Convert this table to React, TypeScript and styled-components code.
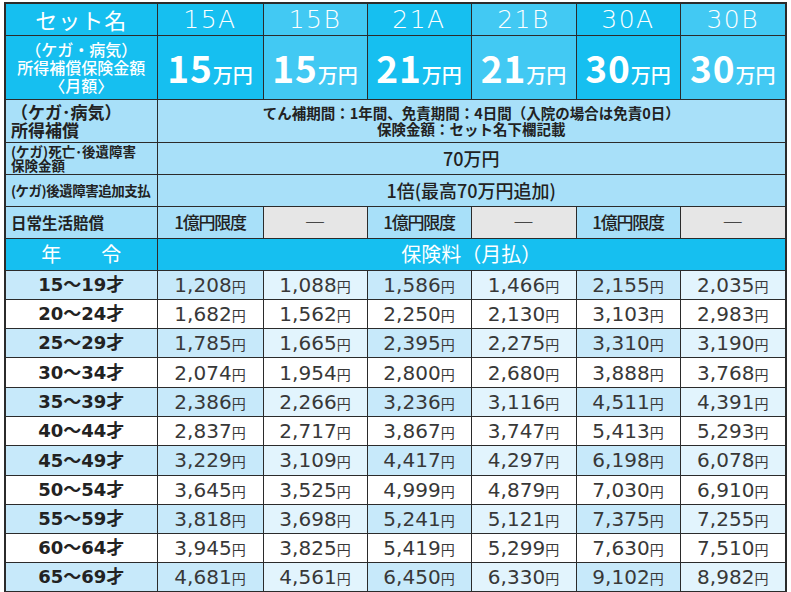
import styled, { createGlobalStyle } from 'styled-components';

const GlobalStyle = createGlobalStyle`
  html, body {
    margin: 0;
    padding: 0;
    background: #fff;
  }
  body {
    font-family: "Noto Sans CJK JP", "Noto Sans", sans-serif;
    color: #222;
  }
`;

const CYAN = '#16bff0';
const CYAN_LIGHT = '#42c9f3';
const SKY = '#a8e0f9';
const ROW_A = '#c7e9fa';
const ROW_B = '#e2f4fd';
const GRAY = '#e6e6e6';
const LATIN = '"DejaVu Sans", "Noto Sans CJK JP", sans-serif';

const sets = [
  { name: '15A', amount: '15', b: false },
  { name: '15B', amount: '15', b: true },
  { name: '21A', amount: '21', b: false },
  { name: '21B', amount: '21', b: true },
  { name: '30A', amount: '30', b: false },
  { name: '30B', amount: '30', b: true },
];

const premiums: [string, string[]][] = [
  ['15～19才', ['1,208', '1,088', '1,586', '1,466', '2,155', '2,035']],
  ['20～24才', ['1,682', '1,562', '2,250', '2,130', '3,103', '2,983']],
  ['25～29才', ['1,785', '1,665', '2,395', '2,275', '3,310', '3,190']],
  ['30～34才', ['2,074', '1,954', '2,800', '2,680', '3,888', '3,768']],
  ['35～39才', ['2,386', '2,266', '3,236', '3,116', '4,511', '4,391']],
  ['40～44才', ['2,837', '2,717', '3,867', '3,747', '5,413', '5,293']],
  ['45～49才', ['3,229', '3,109', '4,417', '4,297', '6,198', '6,078']],
  ['50～54才', ['3,645', '3,525', '4,999', '4,879', '7,030', '6,910']],
  ['55～59才', ['3,818', '3,698', '5,241', '5,121', '7,375', '7,255']],
  ['60～64才', ['3,945', '3,825', '5,419', '5,299', '7,630', '7,510']],
  ['65～69才', ['4,681', '4,561', '6,450', '6,330', '9,102', '8,982']],
];

export default function App() {
  return (
    <>
      <GlobalStyle />
      <Page>
        <Table>
          <colgroup>
            <col style={{ width: 152 }} />
            <col style={{ width: 106 }} />
            <col style={{ width: 104 }} />
            <col style={{ width: 104 }} />
            <col style={{ width: 105 }} />
            <col style={{ width: 104 }} />
            <col style={{ width: 106 }} />
          </colgroup>
          <tbody>
            <Row $h={32}>
              <HeadCell>セット名</HeadCell>
              {sets.map((s) => (
                <SetCell key={s.name} $light={s.b}>
                  {s.name}
                </SetCell>
              ))}
            </Row>
            <Row $h={64}>
              <HeadLabel>
                （ケガ・病気）
                <br />
                所得補償保険金額
                <br />
                〈月額〉
              </HeadLabel>
              {sets.map((s) => (
                <AmountCell key={s.name} $light={s.b}>
                  <Big>{s.amount}</Big>
                  <Unit>万円</Unit>
                </AmountCell>
              ))}
            </Row>
            <Row $h={43}>
              <Label $size={17} $lh={18}>
                （ケガ･病気）
                <br />
                所得補償
              </Label>
              <Info colSpan={6} $size={14.5} $weight={700}>
                てん補期間：1年間、免責期間：4日間（入院の場合は免責0日）
                <br />
                保険金額：セット名下欄記載
              </Info>
            </Row>
            <Row $h={32}>
              <Label $size={13.5} $lh={14}>
                (ケガ)死亡･後遺障害
                <br />
                保険金額
              </Label>
              <Info colSpan={6} $size={18} $weight={500}>
                70万円
              </Info>
            </Row>
            <Row $h={32}>
              <Label $size={13.5} $lh={16} $tight>
                (ケガ)後遺障害追加支払
              </Label>
              <Info colSpan={6} $size={18} $weight={500}>
                1倍(最高70万円追加)
              </Info>
            </Row>
            <Row $h={32}>
              <Label $size={15.5} $lh={18}>
                日常生活賠償
              </Label>
              {sets.map((s) => (
                <LiabilityCell key={s.name} $none={s.b}>
                  {s.b ? '―' : '1億円限度'}
                </LiabilityCell>
              ))}
            </Row>
            <Row $h={32}>
              <BandCell>年　　令</BandCell>
              <BandCell colSpan={6}>保険料（月払）</BandCell>
            </Row>
            {premiums.map(([age, values], i) => (
              <Row key={age} $h={29.3}>
                <AgeCell $tint={i % 2 === 0}>{age}</AgeCell>
                {values.map((v, j) => (
                  <PriceCell key={j} $tint={i % 2 === 0} $light={j % 2 === 1}>
                    {v}
                    <Yen>円</Yen>
                  </PriceCell>
                ))}
              </Row>
            ))}
          </tbody>
        </Table>
      </Page>
    </>
  );
}

const Page = styled.div`
  padding: 2px 0 0 4px;
`;

const Table = styled.table`
  width: 781px;
  table-layout: fixed;
  border-collapse: collapse;
  border: 2px solid #2b2b2b;

  td {
    border: 1.5px solid #2b2b2b;
    padding: 0;
    text-align: center;
    vertical-align: middle;
    line-height: 1.1;
    white-space: nowrap;
    overflow: hidden;
  }
`;

const Row = styled.tr<{ $h: number }>`
  height: ${(p) => p.$h}px;
`;

const HeadCell = styled.td`
  background: ${CYAN};
  color: #fff;
  font-size: 22px;
  font-weight: 400;
  letter-spacing: 1px;
`;

const SetCell = styled.td<{ $light: boolean }>`
  background: ${(p) => (p.$light ? CYAN_LIGHT : CYAN)};
  color: #fff;
  font-family: ${LATIN};
  font-size: 25px;
  font-weight: 200;
  letter-spacing: 1.5px;
`;

const HeadLabel = styled.td`
  background: ${CYAN};
  color: #fff;
  font-size: 16px;
  line-height: 18px !important;
  font-weight: 500;
`;

const AmountCell = styled.td<{ $light: boolean }>`
  background: ${(p) => (p.$light ? CYAN_LIGHT : CYAN)};
  color: #fff;
`;

const Big = styled.span`
  font-size: 37px;
  font-weight: 700;
  letter-spacing: 1px;
`;

const Unit = styled.span`
  font-size: 20px;
  font-weight: 500;
`;

const Label = styled.td<{ $size: number; $lh: number; $tight?: boolean }>`
  background: ${SKY};
  font-size: ${(p) => p.$size}px;
  line-height: ${(p) => p.$lh}px !important;
  letter-spacing: ${(p) => (p.$tight ? '-0.5px' : '0')};
  font-weight: 700;
  text-align: left !important;
  padding-left: 5px !important;
  color: #222;
`;

const Info = styled.td<{ $size: number; $weight: number }>`
  background: ${SKY};
  font-size: ${(p) => p.$size}px;
  line-height: 1.05 !important;
  font-weight: ${(p) => p.$weight};
  color: #222;
`;

const LiabilityCell = styled.td<{ $none: boolean }>`
  background: ${(p) => (p.$none ? GRAY : SKY)};
  font-size: ${(p) => (p.$none ? '21px' : '17px')};
  font-weight: ${(p) => (p.$none ? 300 : 500)};
  letter-spacing: ${(p) => (p.$none ? '0' : '-1.2px')};
  color: #222;
`;

const BandCell = styled.td`
  background: ${CYAN};
  color: #fff;
  font-size: 20px;
  font-weight: 400;
`;

const AgeCell = styled.td<{ $tint: boolean }>`
  background: ${(p) => (p.$tint ? ROW_A : '#fff')};
  font-family: ${LATIN};
  font-size: 18px;
  font-weight: 700;
  color: #222;
`;

const PriceCell = styled.td<{ $tint: boolean; $light: boolean }>`
  background: ${(p) => (!p.$tint ? '#fff' : p.$light ? ROW_B : ROW_A)};
  font-family: ${LATIN};
  font-size: 20px;
  font-weight: 400;
  color: #383838;
`;

const Yen = styled.span`
  font-family: "Noto Sans CJK JP", sans-serif;
  font-size: 14px;
`;
